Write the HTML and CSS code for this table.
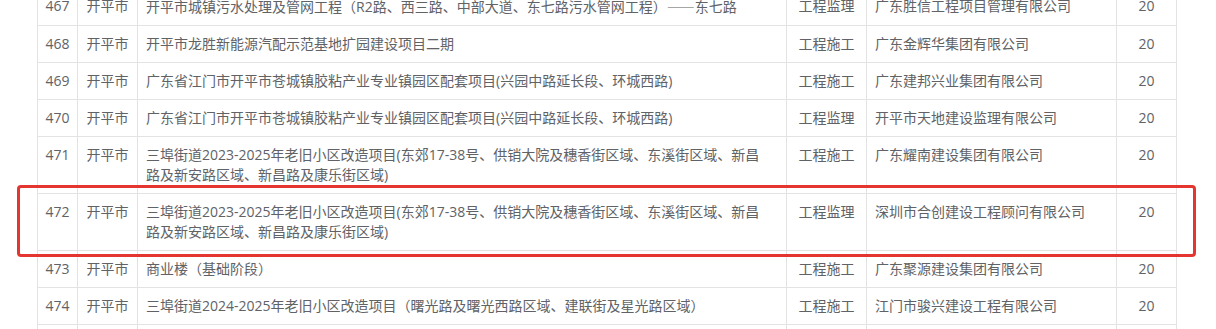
FILE: index.html
```html
<!DOCTYPE html>
<html lang="zh-CN">
<head>
<meta charset="utf-8">
<title>项目列表</title>
<link rel="stylesheet" href="styles.css">
</head>
<body>
<div class="page">
  <table class="list">
    <colgroup>
      <col class="c-no"><col class="c-area"><col class="c-name"><col class="c-type"><col class="c-org"><col class="c-score">
    </colgroup>
    <tbody>
      <tr><td class="ctr">467</td><td class="ctr">开平市</td><td class="name">开平市城镇污水处理及管网工程（R2路、西三路、中部大道、东七路污水管网工程）<span class="cjk">——</span>东七路</td><td class="ctr">工程监理</td><td>广东胜信工程项目管理有限公司</td><td class="ctr">20</td></tr>
      <tr><td class="ctr">468</td><td class="ctr">开平市</td><td class="name">开平市龙胜新能源汽配示范基地扩园建设项目二期</td><td class="ctr">工程施工</td><td>广东金辉华集团有限公司</td><td class="ctr">20</td></tr>
      <tr><td class="ctr">469</td><td class="ctr">开平市</td><td class="name">广东省江门市开平市苍城镇胶粘产业专业镇园区配套项目(兴园中路延长段、环城西路)</td><td class="ctr">工程施工</td><td>广东建邦兴业集团有限公司</td><td class="ctr">20</td></tr>
      <tr><td class="ctr">470</td><td class="ctr">开平市</td><td class="name">广东省江门市开平市苍城镇胶粘产业专业镇园区配套项目(兴园中路延长段、环城西路)</td><td class="ctr">工程监理</td><td>开平市天地建设监理有限公司</td><td class="ctr">20</td></tr>
      <tr><td class="ctr">471</td><td class="ctr">开平市</td><td class="name">三埠街道2023-2025年老旧小区改造项目(东郊17-38号、供销大院及穗香街区域、东溪街区域、新昌路及新安路区域、新昌路及康乐街区域)</td><td class="ctr">工程施工</td><td>广东耀南建设集团有限公司</td><td class="ctr">20</td></tr>
      <tr><td class="ctr">472</td><td class="ctr">开平市</td><td class="name">三埠街道2023-2025年老旧小区改造项目(东郊17-38号、供销大院及穗香街区域、东溪街区域、新昌路及新安路区域、新昌路及康乐街区域)</td><td class="ctr">工程监理</td><td>深圳市合创建设工程顾问有限公司</td><td class="ctr">20</td></tr>
      <tr><td class="ctr">473</td><td class="ctr">开平市</td><td class="name">商业楼（基础阶段）</td><td class="ctr">工程施工</td><td>广东聚源建设集团有限公司</td><td class="ctr">20</td></tr>
      <tr><td class="ctr">474</td><td class="ctr">开平市</td><td class="name">三埠街道2024-2025年老旧小区改造项目（曙光路及曙光西路区域、建联街及星光路区域）</td><td class="ctr">工程施工</td><td>江门市骏兴建设工程有限公司</td><td class="ctr">20</td></tr>
      <tr><td class="ctr"></td><td class="ctr"></td><td class="name"></td><td class="ctr"></td><td></td><td class="ctr"></td></tr>
    </tbody>
  </table>
  <div class="highlight"></div>
</div>
</body>
</html>
```
FILE: styles.css
```css
html, body {
  margin: 0;
  padding: 0;
  background: #ffffff;
  overflow: hidden;
}
body {
  font-family: "Open Sans", "Noto Sans CJK SC", sans-serif;
  font-size: 14px;
  color: #606266;
}
.cjk {
  font-family: "Noto Sans CJK SC", sans-serif;
}
.page {
  position: relative;
  margin-top: -13px;
  padding-left: 37px;
}
.list {
  width: 1140px;
  table-layout: fixed;
  border-collapse: collapse;
}
.c-no { width: 40px; }
.c-area { width: 60px; }
.c-name { width: 649px; }
.c-type { width: 80px; }
.c-org { width: 250px; }
.c-score { width: 60px; }
.list td {
  border: 1px solid #e3e3e3;
  padding: 8px 8px;
  line-height: 20px;
  vertical-align: top;
  text-align: left;
  height: 20px;
}
.list td.name {
  padding-right: 20px;
}
.list td.ctr {
  text-align: center;
  padding: 8px 4px;
}
.highlight {
  position: absolute;
  left: 17px;
  top: 198px;
  width: 1179px;
  height: 72px;
  box-sizing: border-box;
  border: 3px solid #e53530;
  border-radius: 4px;
  pointer-events: none;
}
```
